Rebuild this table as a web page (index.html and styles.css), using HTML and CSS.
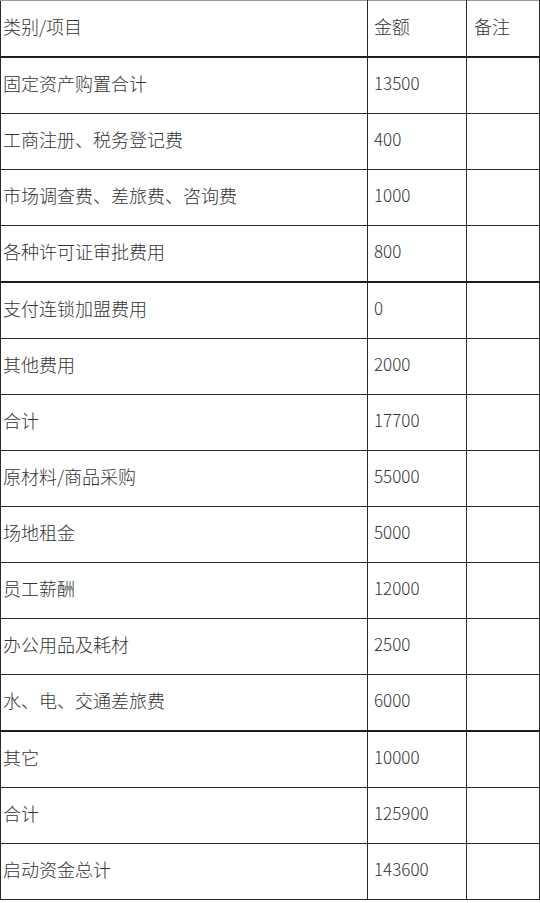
FILE: index.html
```html
<!DOCTYPE html>
<html lang="zh-CN">
<head>
<meta charset="utf-8">
<title>启动资金</title>
<link rel="stylesheet" href="styles.css">
</head>
<body>
<table class="budget">
  <colgroup>
    <col class="c-item">
    <col class="c-amount">
    <col class="c-note">
  </colgroup>
  <tr class="head"><td>类别/项目</td><td class="amt">金额</td><td class="note">备注</td></tr>
  <tr><td>固定资产购置合计</td><td class="amt num">13500</td><td class="note"></td></tr>
  <tr><td>工商注册、税务登记费</td><td class="amt num">400</td><td class="note"></td></tr>
  <tr><td>市场调查费、差旅费、咨询费</td><td class="amt num">1000</td><td class="note"></td></tr>
  <tr><td>各种许可证审批费用</td><td class="amt num">800</td><td class="note"></td></tr>
  <tr class="thick"><td>支付连锁加盟费用</td><td class="amt num">0</td><td class="note"></td></tr>
  <tr><td>其他费用</td><td class="amt num">2000</td><td class="note"></td></tr>
  <tr><td>合计</td><td class="amt num">17700</td><td class="note"></td></tr>
  <tr><td>原材料/商品采购</td><td class="amt num">55000</td><td class="note"></td></tr>
  <tr><td>场地租金</td><td class="amt num">5000</td><td class="note"></td></tr>
  <tr><td>员工薪酬</td><td class="amt num">12000</td><td class="note"></td></tr>
  <tr><td>办公用品及耗材</td><td class="amt num">2500</td><td class="note"></td></tr>
  <tr><td>水、电、交通差旅费</td><td class="amt num">6000</td><td class="note"></td></tr>
  <tr class="thick"><td>其它</td><td class="amt num">10000</td><td class="note"></td></tr>
  <tr><td>合计</td><td class="amt num">125900</td><td class="note"></td></tr>
  <tr><td>启动资金总计</td><td class="amt num">143600</td><td class="note"></td></tr>
</table>
</body>
</html>
```
FILE: styles.css
```css
html, body {
  margin: 0;
  padding: 0;
  background: #ffffff;
}
.budget {
  border-collapse: collapse;
  width: 539px;
  table-layout: fixed;
  font-family: "Noto Sans CJK SC", "Liberation Serif", serif;
  font-size: 18px;
  font-weight: 300;
  color: #333333;
}
.c-item { width: 367px; }
.c-amount { width: 99px; }
.c-note { width: 73px; }
.budget td {
  border: 1px solid #2a2a2a;
  height: 49px;
  padding: 0 0 6px 2px;
  vertical-align: middle;
  line-height: 1;
  white-space: nowrap;
}
.budget tr.head td {
  height: 49px;
  border-top-color: #9a9a9a;
  border-bottom: 2px solid #1e1e1e;
  padding-bottom: 6px;
}
.budget tr.thick td {
  border-top: 2px solid #1e1e1e;
}
.budget td.amt {
  padding-left: 6px;
}
.budget td.note {
  padding-left: 7px;
}
.budget td.num {
  font-size: 17px;
}
```
